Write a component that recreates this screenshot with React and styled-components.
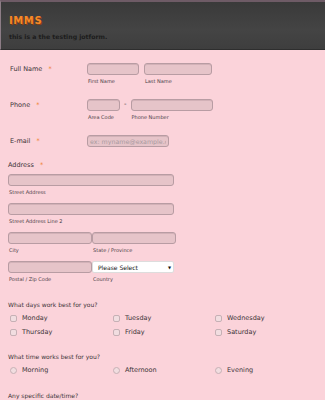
import React from 'react';
import styled, { createGlobalStyle } from 'styled-components';

const GlobalStyle = createGlobalStyle`
  html, body {
    margin: 0;
    padding: 0;
    background: #fbd3da;
  }
  body {
    font-family: 'DejaVu Sans', Verdana, sans-serif;
    color: #3b3338;
    width: 325px;
    height: 400px;
    overflow: hidden;
  }
`;

const days = ['Monday', 'Tuesday', 'Wednesday', 'Thursday', 'Friday', 'Saturday'];
const times = ['Morning', 'Afternoon', 'Evening'];

const App = () => {
  return (
    <>
      <GlobalStyle />
      <Header>
        <Title>IMMS</Title>
        <Subtitle>this is a the testing jotform.</Subtitle>
      </Header>
      <Form>
        <Line>
          <Label>
            Full Name <Req>*</Req>
          </Label>
          <Field>
            <Input w={52} />
            <Sub>First Name</Sub>
          </Field>
          <Field>
            <Input w={68} />
            <Sub>Last Name</Sub>
          </Field>
        </Line>
        <Line top={15}>
          <Label>
            Phone <Req>*</Req>
          </Label>
          <Field>
            <Input w={33} />
            <Sub>Area Code</Sub>
          </Field>
          <Dash>-</Dash>
          <Field>
            <Input w={82} />
            <Sub>Phone Number</Sub>
          </Field>
        </Line>
        <Line top={15}>
          <Label>
            E-mail <Req>*</Req>
          </Label>
          <Field>
            <Input w={82} muted defaultValue="ex: myname@example.com" />
          </Field>
        </Line>
        <Block>
          <AddrLabel>
            Address <Req>*</Req>
          </AddrLabel>
          <Field>
            <Input w={166} />
            <Sub>Street Address</Sub>
          </Field>
          <Field>
            <Input w={166} />
            <Sub>Street Address Line 2</Sub>
          </Field>
          <Pair>
            <Field>
              <Input w={84} />
              <Sub>City</Sub>
            </Field>
            <Field>
              <Input w={84} />
              <Sub>State / Province</Sub>
            </Field>
          </Pair>
          <Pair>
            <Field>
              <Input w={84} />
              <Sub>Postal / Zip Code</Sub>
            </Field>
            <Field>
              <Select>
                <span>Please Select</span>
                <Arrow>▼</Arrow>
              </Select>
              <Sub>Country</Sub>
            </Field>
          </Pair>
        </Block>
        <Question top={18}>What days work best for you?</Question>
        <Options>
          {days.map((d) => (
            <Option key={d}>
              <Box />
              {d}
            </Option>
          ))}
        </Options>
        <Question top={15}>What time works best for you?</Question>
        <Options>
          {times.map((t) => (
            <Option key={t}>
              <Box round />
              {t}
            </Option>
          ))}
        </Options>
        <Question top={16}>Any specific date/time?</Question>
      </Form>
    </>
  );
};

export default App;

const Header = styled.header`
  height: 50px;
  box-sizing: border-box;
  border-top: 2px solid #6e5b66;
  border-left: 1px solid #8d7d86;
  border-bottom: 1px solid #2e2e2e;
  background: linear-gradient(#3a3a3a, #444 60%, #3e3e3e);
  padding: 13px 8px 0;
`;
const Title = styled.div`
  font-family: 'DejaVu Sans', sans-serif;
  font-weight: bold;
  font-size: 10px;
  letter-spacing: 0.6px;
  color: #f5892a;
  text-shadow: 1px 1px 0 #8a3f10;
  line-height: 12px;
`;
const Subtitle = styled.div`
  margin-top: 5px;
  font-size: 6.2px;
  font-weight: bold;
  color: #1c1c1c;
  line-height: 9px;
`;
const Form = styled.div`
  padding: 13px 8px 0 8px;
`;
const Line = styled.div`
  display: flex;
  align-items: flex-start;
  gap: 5px;
  margin-top: ${(p) => p.top || 0}px;
`;
const Label = styled.div`
  width: 72px;
  padding-left: 2px;
  padding-top: 2px;
  font-size: 6.5px;
  line-height: 9px;
`;
const Req = styled.span`
  color: #f07a1a;
  margin-left: 4px;
`;
const Field = styled.div`
  display: flex;
  flex-direction: column;
`;
const Input = styled.input`
  box-sizing: border-box;
  width: ${(p) => p.w}px;
  height: 12px;
  margin: 0;
  padding: 0 2px;
  border: 1px solid #b89ca3;
  border-radius: 3px;
  background: #e6c4c9;
  box-shadow: inset 0 1px 0 #d2b1b7;
  font-family: 'DejaVu Sans', sans-serif;
  font-size: 6.3px;
  color: ${(p) => (p.muted ? '#a99aa0' : '#333')};
  outline: none;
`;
const Sub = styled.div`
  font-size: 5px;
  line-height: 6px;
  margin-top: 3px;
  padding-left: 1px;
  color: #4a4046;
`;
const Dash = styled.div`
  font-size: 7px;
  line-height: 10px;
  margin: 0 -1px 0 -1px;
`;
const Block = styled.div`
  margin-top: 14px;
  display: flex;
  flex-direction: column;
  gap: 8px;
`;
const AddrLabel = styled.div`
  font-size: 6.5px;
  line-height: 9px;
  margin-bottom: -4px;
`;
const Pair = styled.div`
  display: flex;
`;
const Select = styled.div`
  box-sizing: border-box;
  width: 82px;
  height: 12px;
  display: flex;
  align-items: center;
  justify-content: space-between;
  padding: 0 2px 0 5px;
  background: #fff;
  border: 1px solid #ddd;
  border-radius: 2px;
  font-size: 6px;
  color: #111;
`;
const Arrow = styled.span`
  font-size: 4px;
`;
const Question = styled.div`
  margin-top: ${(p) => p.top}px;
  font-size: 6px;
  line-height: 9px;
`;
const Options = styled.div`
  display: grid;
  grid-template-columns: 103px 102px 1fr;
  row-gap: 5px;
  margin-top: 5px;
  padding-left: 2px;
`;
const Option = styled.div`
  display: flex;
  align-items: center;
  font-size: 6.5px;
  line-height: 9px;
`;
const Box = styled.span`
  box-sizing: border-box;
  width: 7px;
  height: 7px;
  margin-right: 5px;
  border: 1px solid #c6b0b5;
  border-radius: ${(p) => (p.round ? '50%' : '2px')};
  background: #f1dde0;
`;
